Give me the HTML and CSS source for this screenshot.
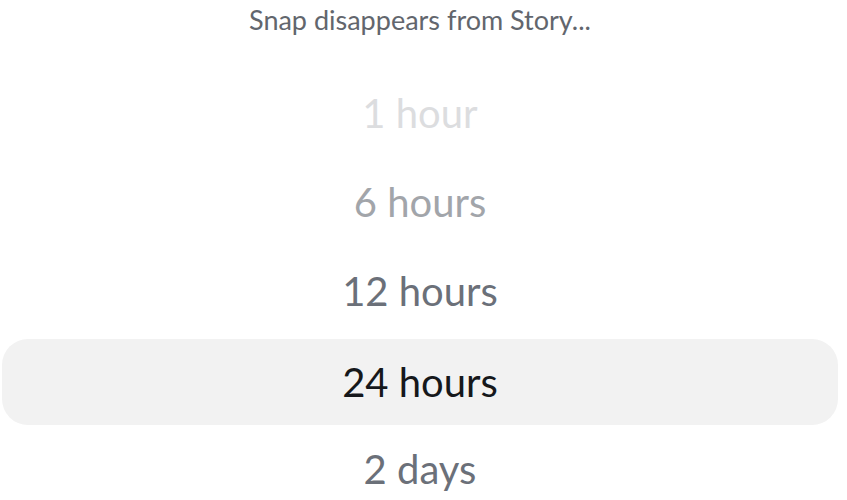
FILE: index.html
```html
<!DOCTYPE html>
<html lang="en">
<head>
  <meta charset="UTF-8" />
  <meta name="viewport" content="width=device-width, initial-scale=1" />
  <title>Story duration</title>
  <link rel="stylesheet" href="styles.css">
</head>
<body>
  <div id="picker">
    <p class="picker-title">Snap disappears from Story...</p>

    <ul class="picker-list">
      <li class="picker-item far">1 hour</li>
      <li class="picker-item near">6 hours</li>
      <li class="picker-item">12 hours</li>
      <li class="picker-item selected">24 hours</li>
      <li class="picker-item">2 days</li>
    </ul>
  </div>
</body>
</html>
```

FILE: styles.css
```css
* {
  margin: 0;
  padding: 0;
  box-sizing: border-box;
}

body {
  background-color: #ffffff;
  height: 100vh;
  overflow: hidden;
  font-family: Lato, 'Noto Sans', sans-serif;
}

#picker {
  width: 847px;
  padding: 0 9px 0 2px;
  display: flex;
  flex-direction: column;
}

.picker-title {
  height: 68px;
  padding-top: 3px;
  text-align: center;
  font-size: 27px;
  color: #62666d;
}

.picker-list {
  list-style: none;
  display: flex;
  flex-direction: column;
}

.picker-item {
  height: 89px;
  display: flex;
  align-items: center;
  justify-content: center;
  font-size: 40px;
  color: #6b7079;
}

.picker-item.far {
  color: #dcdddf;
}

.picker-item.near {
  color: #a2a5aa;
}

.picker-item.selected {
  height: 86px;
  margin: 4px 0 -1px;
  background-color: #f2f2f2;
  border-radius: 26px;
  color: #16181b;
}
```
